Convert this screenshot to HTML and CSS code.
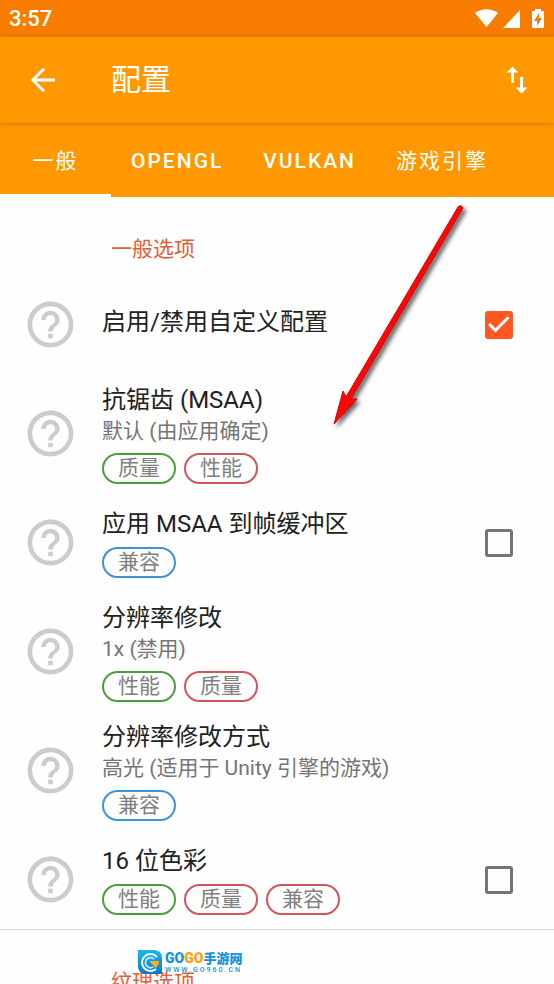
FILE: index.html
```html
<!DOCTYPE html>
<html lang="zh-CN">
<head>
<meta charset="utf-8">
<meta name="viewport" content="width=device-width, initial-scale=1">
<title>配置</title>
<link rel="stylesheet" href="styles.css">
</head>
<body>
<svg class="defs" aria-hidden="true">
  <symbol id="help" viewBox="0 0 24 24"><path d="M11 18h2v-2h-2v2zm1-16C6.48 2 2 6.48 2 12s4.480 10 10 10 10-4.480 10-10S17.520 2 12 2zm0 18c-4.410 0-8-3.590-8-8s3.590-8 8-8 8 3.590 8 8-3.590 8-8 8zm0-14c-2.210 0-4 1.790-4 4h2c0-1.100.9-2 2-2s2 .9 2 2c0 2-3 1.750-3 5h2c0-2.250 3-2.500 3-5 0-2.210-1.790-4-4-4z"/></symbol>
</svg>
<div class="app">
  <div class="status">
    <span>3:57</span>
    <svg class="status-icons" viewBox="0 0 70 20" aria-hidden="true">
      <path d="M0 4Q11.500-3.500 23 4L11.500 18Z"/>
      <path d="M28 19L45 1V19Z"/>
      <path fill-rule="evenodd" d="M60 0h6v2h2q1 0 1 1v15q0 1-1 1H58q-1 0-1-1V3q0-1 1-1h2zM64 4l-5 8h3v5l5-8h-3z"/>
    </svg>
  </div>
  <header class="toolbar">
    <button class="icon-button" aria-label="返回"><svg viewBox="0 0 24 24"><path fill="none" stroke="currentColor" stroke-width="2" stroke-linecap="square" d="M19 12H6M12 5.200L5.200 12L12 18.800"/></svg></button>
    <h1>配置</h1>
    <button class="icon-button" aria-label="导入或导出"><svg viewBox="0 0 24 24"><path d="M9 3L5 6.990h3V14h2V6.990h3L9 3zm7 14.010V10h-2v7.010h-3L15 21l4-3.990h-3z"/></svg></button>
  </header>
  <nav class="tabs">
    <a class="tab active" href="#general">一般</a>
    <a class="tab" href="#opengl">OPENGL</a>
    <a class="tab" href="#vulkan">VULKAN</a>
    <a class="tab" href="#engine">游戏引擎</a>
  </nav>
  <main class="list">
    <section id="general">
      <h2>一般选项</h2>
      <div class="row">
        <svg class="help"><use href="#help"/></svg>
        <div class="text"><label class="title" for="custom">启用/禁用自定义配置</label></div>
        <input type="checkbox" id="custom" checked>
      </div>
      <div class="row tall">
        <svg class="help"><use href="#help"/></svg>
        <div class="text">
          <div class="title">抗锯齿 (MSAA)</div>
          <div class="summary">默认 (由应用确定)</div>
          <div class="chips"><span class="chip green">质量</span><span class="chip red">性能</span></div>
        </div>
      </div>
      <div class="row">
        <svg class="help"><use href="#help"/></svg>
        <div class="text">
          <label class="title" for="fbo">应用 MSAA 到帧缓冲区</label>
          <div class="chips"><span class="chip blue">兼容</span></div>
        </div>
        <input type="checkbox" id="fbo">
      </div>
      <div class="row tall">
        <svg class="help"><use href="#help"/></svg>
        <div class="text">
          <div class="title">分辨率修改</div>
          <div class="summary">1x (禁用)</div>
          <div class="chips"><span class="chip green">性能</span><span class="chip red">质量</span></div>
        </div>
      </div>
      <div class="row tall">
        <svg class="help"><use href="#help"/></svg>
        <div class="text">
          <div class="title">分辨率修改方式</div>
          <div class="summary">高光 (适用于 Unity 引擎的游戏)</div>
          <div class="chips"><span class="chip blue">兼容</span></div>
        </div>
      </div>
      <div class="row">
        <svg class="help"><use href="#help"/></svg>
        <div class="text">
          <label class="title" for="color16">16 位色彩</label>
          <div class="chips"><span class="chip green">性能</span><span class="chip red">质量</span><span class="chip red">兼容</span></div>
        </div>
        <input type="checkbox" id="color16">
      </div>
    </section>
    <section class="divided">
      <h2>纹理选项</h2>
    </section>
  </main>
  <svg class="arrow" viewBox="0 0 140 230" aria-hidden="true">
    <path d="M128 5Q131 2 133 6L21 197L27 197L4 222L13 189L16 195Z"/>
  </svg>
  <div class="watermark">
    <svg viewBox="0 0 24 24" aria-hidden="true">
      <defs><linearGradient id="badge" x2="0" y2="1"><stop stop-color="#18b7ef"/><stop offset="1" stop-color="#0879d1"/></linearGradient></defs>
      <path fill="url(#badge)" d="M0 0H17Q24 1 24 8V24H7Q0 23 0 16Z"/>
      <path fill="none" stroke="#fff" stroke-width="2" d="M19 7A8.500 8.500 0 1 0 18 19"/>
      <path fill="none" stroke="#bdeaff" stroke-width="2" d="M16 9A5 5 0 1 0 15 17"/>
      <path fill="#ffad19" d="M11 11H21Q21 16 17 18L15 15Z"/>
    </svg>
    <div class="brand">
      <div class="name"><b class="go">GO</b><b class="go gold">GO</b><b>手游网</b></div>
      <div class="site">WWW.GO960.CN</div>
    </div>
  </div>
</div>
</body>
</html>
```
FILE: styles.css
```css
* { box-sizing: border-box; }
body {
  margin: 0;
  background: #fefefe;
  color: #212121;
  font-family: Roboto, "Noto Sans CJK SC", sans-serif;
}
h1, h2 { margin: 0; font-weight: 400; }
.defs { position: absolute; width: 0; height: 0; }
.app {
  position: relative;
  display: flex;
  flex-direction: column;
  height: 100vh;
  overflow: hidden;
}
.status {
  flex: none;
  display: flex;
  align-items: center;
  justify-content: space-between;
  height: 37px;
  padding: 0 9px;
  background: #f77c00;
  color: #fff;
  font-size: 22px;
  font-weight: 500;
  line-height: 36px;
}
.status-icons { width: 70px; height: 20px; fill: #fff; }
.toolbar {
  position: relative;
  flex: none;
  display: flex;
  align-items: center;
  height: 86px;
  padding: 0 16px 0 22px;
  background: #ff9800;
  color: #fff;
  box-shadow: 0 1px 5px rgba(120, 60, 0, .35);
}
.toolbar h1 { flex: 1; margin-left: 47px; font-size: 30px; line-height: 40px; }
.icon-button {
  display: flex;
  padding: 0;
  border: 0;
  background: none;
  color: inherit;
}
.icon-button svg { width: 42px; height: 42px; padding: 3px; fill: currentColor; }
.tabs { flex: none; display: flex; height: 74px; background: #ff9800; }
.tab {
  display: flex;
  align-items: center;
  justify-content: center;
  padding: 4px 20px 0;
  border-bottom: 3px solid transparent;
  color: #fff;
  font-size: 21px;
  font-weight: 500;
  line-height: 28px;
  letter-spacing: 2px;
  text-decoration: none;
}
.tab:first-child, .tab:last-child { font-weight: 400; }
.tab.active { min-width: 111px; border-bottom-color: #fff; }
.list { flex: 1; min-height: 0; overflow: hidden; }
h2 {
  padding: 38px 24px 12px 111px;
  color: #e65c35;
  font-size: 21px;
  line-height: 28px;
}
.row {
  display: flex;
  align-items: center;
  min-height: 99px;
  padding-left: 23px;
  padding-right: 41px;
}
.row.tall { min-height: 119px; }
.help { flex: none; width: 55px; height: 55px; fill: #ccc; }
.text { flex: 1; padding: 12px 0 9px 24px; }
.title { display: block; margin-bottom: 9px; font-size: 24px; line-height: 28px; }
.summary { margin: -5px 0 9px; color: #757575; font-size: 21px; line-height: 26px; }
.chips { display: flex; gap: 8px; }
.chip {
  padding: 0 14px;
  border: 2px solid;
  border-radius: 16px;
  font-size: 21px;
  line-height: 27px;
  color: #808080;
}
.green { border-color: #4d9e3a; }
.red { border-color: #d0565a; }
.blue { border-color: #3a94dc; }
input[type="checkbox"] {
  appearance: none;
  flex: none;
  width: 28px;
  height: 28px;
  margin: 0;
  border: 3px solid #757575;
  border-radius: 3px;
}
input[type="checkbox"]:checked { border-color: #ff5722; background: #ff5722; }
input[type="checkbox"]:checked::before {
  content: "";
  display: block;
  width: 22px;
  height: 22px;
  background: #fff;
  clip-path: polygon(0 52%, 9% 42%, 34% 67%, 88% 12%, 98% 22%, 34% 86%);
}
.divided { border-top: 1px solid #dadada; }
.arrow {
  position: absolute;
  left: 330px;
  top: 202px;
  width: 140px;
  height: 230px;
  fill: #fa0808;
  stroke: #d00;
  stroke-width: 1px;
  overflow: visible;
  filter: drop-shadow(3px 3px 2px rgba(0, 0, 0, .6));
}
.watermark {
  position: absolute;
  left: 138px;
  bottom: 10px;
  display: flex;
  align-items: center;
  gap: 3px;
  color: #1593dc;
}
.watermark svg { width: 24px; height: 24px; }
.brand { display: flex; flex-direction: column; }
.name {
  display: flex;
  align-items: center;
  height: 17px;
  font-size: 13px;
  line-height: 17px;
}
.name b { font-weight: 900; }
.name .go { font-size: 14px; }
.name .gold { color: #ff9d10; }
.site { font-size: 7px; font-weight: 500; line-height: 7px; letter-spacing: 2px; }
```
